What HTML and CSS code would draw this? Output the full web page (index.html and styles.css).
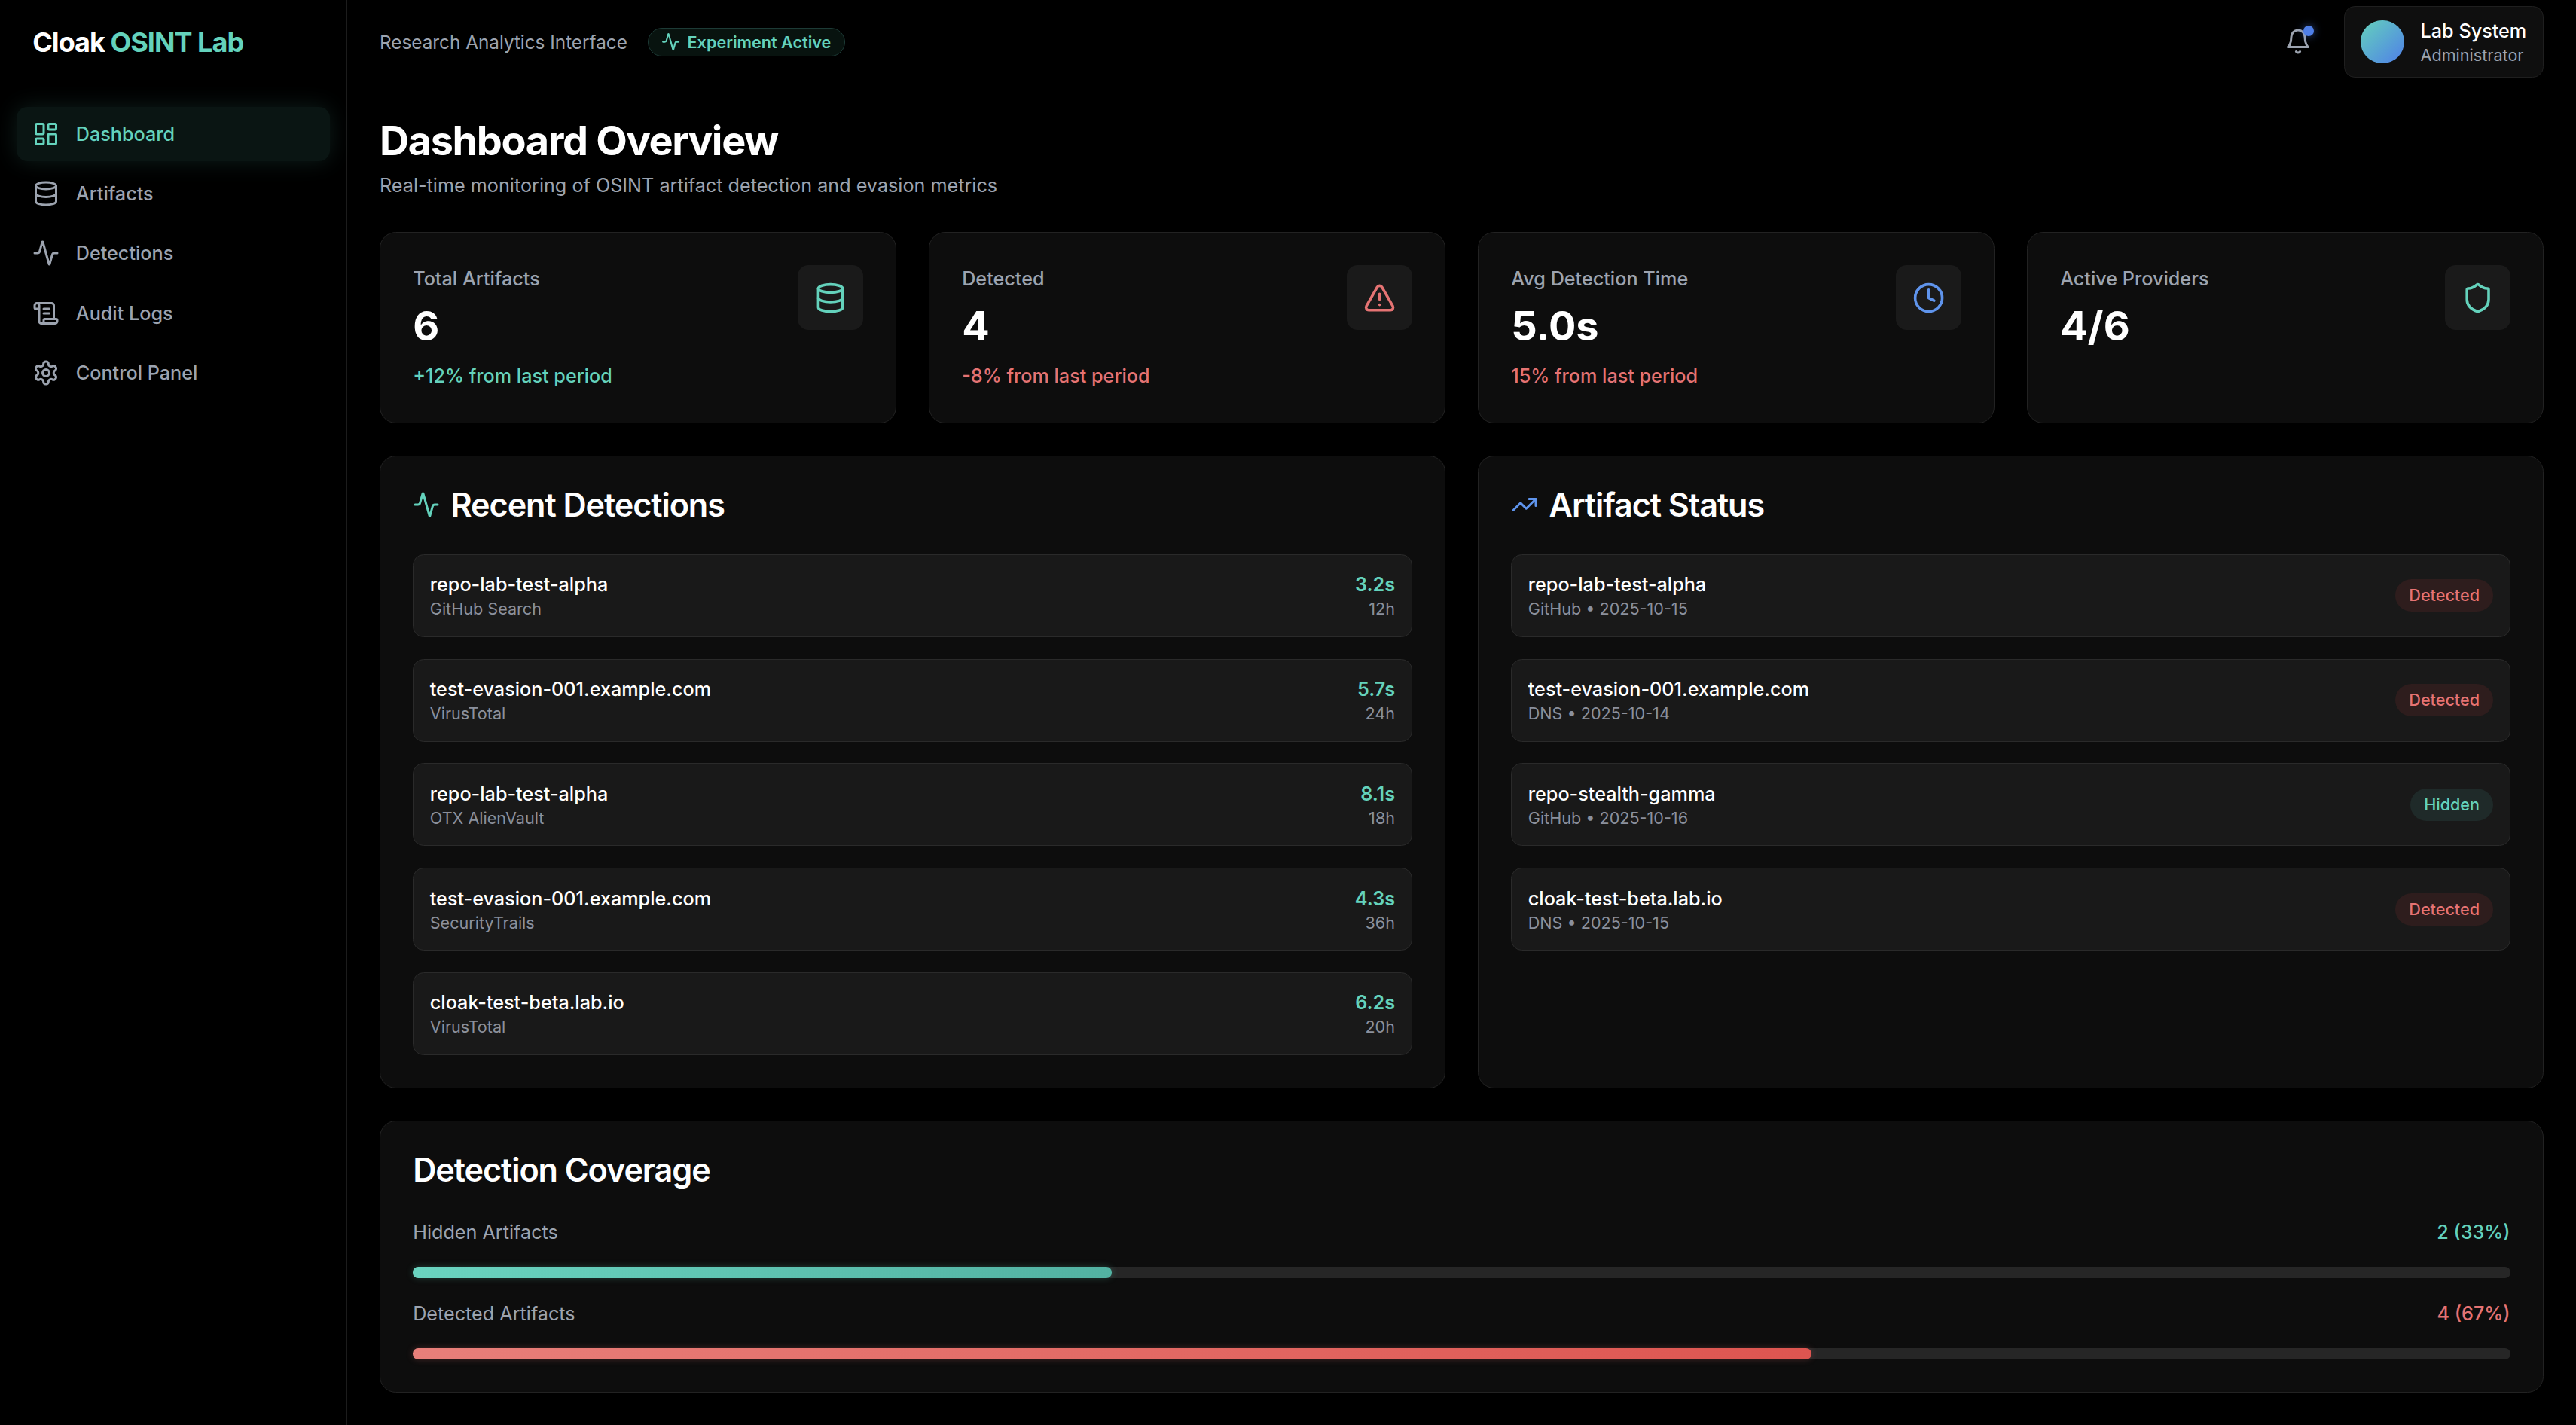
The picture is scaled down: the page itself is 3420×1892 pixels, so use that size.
FILE: index.html
```html
<!DOCTYPE html>
<html lang="en">
<head>
    <meta charset="UTF-8">
    <title>Cloak OSINT Lab</title>
    <link rel="stylesheet" href="styles.css">
</head>
<body>

    <svg class="sprite" xmlns="http://www.w3.org/2000/svg">
        <symbol id="i-dashboard" viewBox="0 0 24 24"><rect x="3" y="3" width="7" height="9" rx="1"/><rect x="14" y="3" width="7" height="5" rx="1"/><rect x="14" y="12" width="7" height="9" rx="1"/><rect x="3" y="16" width="7" height="5" rx="1"/></symbol>
        <symbol id="i-database" viewBox="0 0 24 24"><ellipse cx="12" cy="5" rx="9" ry="3"/><path d="M3 5V19A9 3 0 0 0 21 19V5"/><path d="M3 12A9 3 0 0 0 21 12"/></symbol>
        <symbol id="i-activity" viewBox="0 0 24 24"><path d="M22 12h-2.48a2 2 0 0 0-1.93 1.46l-2.35 8.36a.25.25 0 0 1-.48 0L9.24 2.18a.25.25 0 0 0-.48 0l-2.35 8.36A2 2 0 0 1 4.49 12H2"/></symbol>
        <symbol id="i-scroll" viewBox="0 0 24 24"><path d="M15 12h-5"/><path d="M15 8h-5"/><path d="M19 17V5a2 2 0 0 0-2-2H4"/><path d="M8 21h12a2 2 0 0 0 2-2v-1a1 1 0 0 0-1-1H11a1 1 0 0 0-1 1v1a2 2 0 1 1-4 0V5a2 2 0 1 0-4 0v2a1 1 0 0 0 1 1h3"/></symbol>
        <symbol id="i-settings" viewBox="0 0 24 24"><path d="M12.22 2h-.44a2 2 0 0 0-2 2v.18a2 2 0 0 1-1 1.73l-.43.25a2 2 0 0 1-2 0l-.15-.08a2 2 0 0 0-2.73.73l-.22.38a2 2 0 0 0 .73 2.73l.15.1a2 2 0 0 1 1 1.72v.51a2 2 0 0 1-1 1.74l-.15.09a2 2 0 0 0-.73 2.73l.22.38a2 2 0 0 0 2.73.73l.15-.08a2 2 0 0 1 2 0l.43.25a2 2 0 0 1 1 1.73V20a2 2 0 0 0 2 2h.44a2 2 0 0 0 2-2v-.18a2 2 0 0 1 1-1.73l.43-.25a2 2 0 0 1 2 0l.15.08a2 2 0 0 0 2.73-.73l.22-.39a2 2 0 0 0-.73-2.73l-.15-.08a2 2 0 0 1-1-1.74v-.5a2 2 0 0 1 1-1.74l.15-.09a2 2 0 0 0 .73-2.73l-.22-.38a2 2 0 0 0-2.73-.73l-.15.08a2 2 0 0 1-2 0l-.43-.25a2 2 0 0 1-1-1.73V4a2 2 0 0 0-2-2z"/><circle cx="12" cy="12" r="3"/></symbol>
        <symbol id="i-bell" viewBox="0 0 24 24"><path d="M6 8a6 6 0 0 1 12 0c0 7 3 9 3 9H3s3-2 3-9"/><path d="M10.3 21a1.94 1.94 0 0 0 3.4 0"/></symbol>
        <symbol id="i-alert" viewBox="0 0 24 24"><path d="m21.73 18-8-14a2 2 0 0 0-3.48 0l-8 14A2 2 0 0 0 4 21h16a2 2 0 0 0 1.73-3"/><path d="M12 9v4"/><path d="M12 17h.01"/></symbol>
        <symbol id="i-clock" viewBox="0 0 24 24"><circle cx="12" cy="12" r="10"/><polyline points="12 6 12 12 16 14"/></symbol>
        <symbol id="i-shield" viewBox="0 0 24 24"><path d="M20 13c0 5-3.5 7.5-7.66 8.95a1 1 0 0 1-.67-.01C7.5 20.5 4 18 4 13V6a1 1 0 0 1 1-1c2 0 4.5-1.2 6.24-2.72a1.17 1.17 0 0 1 1.52 0C14.51 3.81 17 5 19 5a1 1 0 0 1 1 1z"/></symbol>
        <symbol id="i-trending" viewBox="0 0 24 24"><polyline points="22 7 13.5 15.5 8.5 10.5 2 17"/><polyline points="16 7 22 7 22 13"/></symbol>
    </svg>

    <div class="app">
        <aside class="sidebar">
            <div class="logo">Cloak <span class="teal">OSINT Lab</span></div>
            <nav class="nav">
                <a class="nav-item active"><svg class="icon"><use href="#i-dashboard"/></svg>Dashboard</a>
                <a class="nav-item"><svg class="icon"><use href="#i-database"/></svg>Artifacts</a>
                <a class="nav-item"><svg class="icon"><use href="#i-activity"/></svg>Detections</a>
                <a class="nav-item"><svg class="icon"><use href="#i-scroll"/></svg>Audit Logs</a>
                <a class="nav-item"><svg class="icon"><use href="#i-settings"/></svg>Control Panel</a>
            </nav>
            <div class="sidebar-foot"></div>
        </aside>

        <div class="main">
            <header class="topbar">
                <div class="topbar-left">
                    <span class="topbar-title">Research Analytics Interface</span>
                    <span class="pill"><svg class="icon-sm"><use href="#i-activity"/></svg>Experiment Active</span>
                </div>
                <div class="topbar-right">
                    <div class="bell">
                        <svg class="icon"><use href="#i-bell"/></svg>
                        <span class="bell-dot"></span>
                    </div>
                    <div class="user">
                        <div class="avatar"></div>
                        <div>
                            <div class="user-name">Lab System</div>
                            <div class="user-role">Administrator</div>
                        </div>
                    </div>
                </div>
            </header>

            <main class="content">
                <h1 class="page-title">Dashboard Overview</h1>
                <p class="page-sub">Real-time monitoring of OSINT artifact detection and evasion metrics</p>

                <section class="stats">
                    <div class="stat">
                        <div>
                            <div class="stat-label">Total Artifacts</div>
                            <div class="stat-value">6</div>
                            <div class="stat-note teal">+12% from last period</div>
                        </div>
                        <div class="stat-icon teal"><svg class="icon-lg"><use href="#i-database"/></svg></div>
                    </div>
                    <div class="stat">
                        <div>
                            <div class="stat-label">Detected</div>
                            <div class="stat-value">4</div>
                            <div class="stat-note red">-8% from last period</div>
                        </div>
                        <div class="stat-icon red"><svg class="icon-lg"><use href="#i-alert"/></svg></div>
                    </div>
                    <div class="stat">
                        <div>
                            <div class="stat-label">Avg Detection Time</div>
                            <div class="stat-value">5.0s</div>
                            <div class="stat-note red">15% from last period</div>
                        </div>
                        <div class="stat-icon blue"><svg class="icon-lg"><use href="#i-clock"/></svg></div>
                    </div>
                    <div class="stat">
                        <div>
                            <div class="stat-label">Active Providers</div>
                            <div class="stat-value">4/6</div>
                        </div>
                        <div class="stat-icon teal"><svg class="icon-lg"><use href="#i-shield"/></svg></div>
                    </div>
                </section>

                <section class="columns">
                    <div class="panel">
                        <h2 class="panel-title"><svg class="icon teal"><use href="#i-activity"/></svg>Recent Detections</h2>
                        <div class="list">
                            <div class="row">
                                <div><div class="row-name">repo-lab-test-alpha</div><div class="row-sub">GitHub Search</div></div>
                                <div class="row-right"><div class="row-time teal">3.2s</div><div class="row-sub">12h</div></div>
                            </div>
                            <div class="row">
                                <div><div class="row-name">test-evasion-001.example.com</div><div class="row-sub">VirusTotal</div></div>
                                <div class="row-right"><div class="row-time teal">5.7s</div><div class="row-sub">24h</div></div>
                            </div>
                            <div class="row">
                                <div><div class="row-name">repo-lab-test-alpha</div><div class="row-sub">OTX AlienVault</div></div>
                                <div class="row-right"><div class="row-time teal">8.1s</div><div class="row-sub">18h</div></div>
                            </div>
                            <div class="row">
                                <div><div class="row-name">test-evasion-001.example.com</div><div class="row-sub">SecurityTrails</div></div>
                                <div class="row-right"><div class="row-time teal">4.3s</div><div class="row-sub">36h</div></div>
                            </div>
                            <div class="row">
                                <div><div class="row-name">cloak-test-beta.lab.io</div><div class="row-sub">VirusTotal</div></div>
                                <div class="row-right"><div class="row-time teal">6.2s</div><div class="row-sub">20h</div></div>
                            </div>
                        </div>
                    </div>

                    <div class="panel">
                        <h2 class="panel-title"><svg class="icon blue"><use href="#i-trending"/></svg>Artifact Status</h2>
                        <div class="list">
                            <div class="row">
                                <div><div class="row-name">repo-lab-test-alpha</div><div class="row-sub">GitHub • 2025-10-15</div></div>
                                <span class="badge badge-red">Detected</span>
                            </div>
                            <div class="row">
                                <div><div class="row-name">test-evasion-001.example.com</div><div class="row-sub">DNS • 2025-10-14</div></div>
                                <span class="badge badge-red">Detected</span>
                            </div>
                            <div class="row">
                                <div><div class="row-name">repo-stealth-gamma</div><div class="row-sub">GitHub • 2025-10-16</div></div>
                                <span class="badge badge-teal">Hidden</span>
                            </div>
                            <div class="row">
                                <div><div class="row-name">cloak-test-beta.lab.io</div><div class="row-sub">DNS • 2025-10-15</div></div>
                                <span class="badge badge-red">Detected</span>
                            </div>
                        </div>
                    </div>
                </section>

                <section class="panel coverage">
                    <h2 class="panel-title">Detection Coverage</h2>
                    <div class="bar-head"><span>Hidden Artifacts</span><span class="bar-value teal">2 (33%)</span></div>
                    <div class="bar"><div class="bar-fill bar-teal" style="width: 33.33%"></div></div>
                    <div class="bar-head"><span>Detected Artifacts</span><span class="bar-value red">4 (67%)</span></div>
                    <div class="bar"><div class="bar-fill bar-red" style="width: 66.67%"></div></div>
                </section>
            </main>
        </div>
    </div>

</body>
</html>
```

FILE: styles.css
```css
* {
    box-sizing: border-box;
}
html, body {
    margin: 0;
    height: 100%;
    background-color: #000;
    overflow: hidden;
}
body {
    font-family: Inter, "Noto Sans", sans-serif;
    color: #fff;
}
.sprite {
    display: none;
}
.teal { color: #64d2bc; }
.red { color: #e57373; }
.blue { color: #5f94ec; }

.icon, .icon-sm, .icon-lg {
    fill: none;
    stroke: currentColor;
    stroke-width: 2;
    stroke-linecap: round;
    stroke-linejoin: round;
    flex: none;
}
.icon { width: 36px; height: 36px; }
.icon-sm { width: 25.2px; height: 25.2px; }
.icon-lg { width: 43.2px; height: 43.2px; }

.app {
    display: grid;
    grid-template-columns: 460.8px 1fr;
    height: 100vh;
}

/* sidebar */
.sidebar {
    display: flex;
    flex-direction: column;
    border-right: 1px solid #1c1c1c;
}
.logo {
    height: 112px;
    padding: 34px 0 0 43.2px;
    font-size: 36px;
    line-height: 44px;
    font-weight: 700;
    letter-spacing: -0.027em;
    border-bottom: 1px solid #1c1c1c;
}
.nav {
    flex: 1;
    display: flex;
    flex-direction: column;
    gap: 7.4px;
    padding: 29.6px 21.6px;
}
.nav-item {
    display: flex;
    align-items: center;
    gap: 21.6px;
    height: 72px;
    padding: 0 21.6px;
    border-radius: 14.4px;
    font-size: 25.2px;
    font-weight: 500;
    color: #9ca3af;
}
.nav-item.active {
    color: #64d2bc;
    background-color: #0a1513;
    box-shadow: 0 0 30px rgba(100, 210, 188, 0.14);
}
.sidebar-foot {
    height: 19px;
    border-top: 1px solid #1c1c1c;
}

/* top bar */
.topbar {
    height: 112px;
    padding: 0 43.2px;
    display: flex;
    align-items: center;
    justify-content: space-between;
    border-bottom: 1px solid #1c1c1c;
}
.topbar-left {
    display: flex;
    align-items: center;
    gap: 27.5px;
}
.topbar-title {
    font-size: 24.3px;
    color: #9ca3af;
}
.pill {
    display: flex;
    align-items: center;
    gap: 9px;
    height: 38px;
    padding: 0 17.6px 0 17px;
    border-radius: 19px;
    border: 1px solid #1d3b36;
    background-color: #08130f;
    color: #64d2bc;
    font-size: 21.6px;
    font-weight: 600;
}
.topbar-right {
    display: flex;
    align-items: center;
    gap: 28.8px;
}
.bell {
    position: relative;
    display: flex;
    padding: 14.4px;
    color: #9ca3af;
}
.bell-dot {
    position: absolute;
    top: 10.8px;
    right: 10.8px;
    width: 14.4px;
    height: 14.4px;
    border-radius: 50%;
    background-color: #4f7fe8;
    box-shadow: 0 0 12px rgba(79, 127, 232, 0.6);
}
.user {
    display: flex;
    align-items: center;
    gap: 21.6px;
    padding: 14.4px 21.6px;
    border: 1px solid #1f1f1f;
    border-radius: 14.4px;
    background-color: #0f0f0f;
}
.avatar {
    width: 57.6px;
    height: 57.6px;
    border-radius: 50%;
    background: linear-gradient(135deg, #64d2bc, #4f7fe8);
}
.user-name {
    font-size: 25.2px;
    font-weight: 500;
    line-height: 36px;
}
.user-role {
    font-size: 21.6px;
    line-height: 28.8px;
    color: #9ca3af;
}

/* main content */
.content {
    padding: 42.6px 43.2px 43.2px;
}
.page-title {
    margin: 0;
    font-size: 54px;
    line-height: 64.8px;
    font-weight: 700;
    letter-spacing: -0.025em;
}
.page-sub {
    margin: 8.4px 0 44px;
    font-size: 25.2px;
    line-height: 36px;
    color: #9ca3af;
}

.stats {
    display: grid;
    grid-template-columns: repeat(4, 1fr);
    gap: 43.2px;
    margin-bottom: 43.2px;
}
.stat {
    display: flex;
    justify-content: space-between;
    height: 254px;
    padding: 43.2px;
    background-color: #0d0d0d;
    border: 1px solid #222;
    border-radius: 21.6px;
}
.stat-label {
    font-size: 25.2px;
    line-height: 36px;
    font-weight: 500;
    color: #9ca3af;
}
.stat-value {
    margin-top: 13.4px;
    font-size: 54px;
    line-height: 64.8px;
    font-weight: 700;
}
.stat-note {
    margin-top: 14.6px;
    font-size: 25.2px;
    line-height: 36px;
    font-weight: 500;
}
.stat-icon {
    width: 86.4px;
    height: 86.4px;
    display: flex;
    align-items: center;
    justify-content: center;
    background-color: #1a1a1a;
    border-radius: 14.4px;
}

.columns {
    display: grid;
    grid-template-columns: 1fr 1fr;
    gap: 43.2px;
    margin-bottom: 43.2px;
}
.panel {
    padding: 40px 43.2px 43.2px;
    background-color: #0d0d0d;
    border: 1px solid #222;
    border-radius: 21.6px;
}
.panel-title {
    display: flex;
    align-items: center;
    gap: 14.4px;
    margin: 0 0 41.8px;
    font-size: 43.2px;
    line-height: 48px;
    font-weight: 600;
    letter-spacing: -0.025em;
}
.list {
    display: flex;
    flex-direction: column;
    gap: 28.8px;
}
.row {
    display: flex;
    align-items: center;
    justify-content: space-between;
    padding: 21.6px;
    background-color: #191919;
    border: 1px solid #2a2a2a;
    border-radius: 14.4px;
}
.row-name {
    font-size: 25.2px;
    line-height: 36px;
    font-weight: 500;
}
.row-sub {
    font-size: 21.6px;
    line-height: 28.8px;
    color: #8b909c;
}
.row-right {
    text-align: right;
}
.row-time {
    font-size: 25.2px;
    line-height: 36px;
    font-weight: 600;
}
.badge {
    padding: 7.2px 18px;
    border-radius: 21.6px;
    font-size: 21.6px;
    line-height: 28.8px;
    font-weight: 500;
}
.badge-red {
    color: #e57373;
    background-color: #2e1d1d;
}
.badge-teal {
    color: #64d2bc;
    background-color: #1f2a29;
}

.coverage .panel-title {
    margin-bottom: 40.4px;
}
.bar-head {
    display: flex;
    justify-content: space-between;
    margin-bottom: 28.8px;
    font-size: 25.2px;
    line-height: 36px;
    color: #9ca3af;
}
.bar-value {
    font-weight: 500;
}
.bar-head .teal { color: #64d2bc; }
.bar-head .red { color: #e57373; }
.bar {
    height: 14.4px;
    margin-bottom: 28.8px;
    background-color: #262626;
    border-radius: 7.2px;
}
.bar:last-child {
    margin-bottom: 0;
}
.bar-fill {
    height: 100%;
    border-radius: 7.2px;
}
.bar-teal {
    background: linear-gradient(90deg, #6ad4c0, #52b2a2);
    box-shadow: 0 0 10px rgba(100, 210, 188, 0.25);
}
.bar-red {
    background: linear-gradient(90deg, #e87f7a, #dd5550);
    box-shadow: 0 0 10px rgba(229, 115, 115, 0.25);
}
```
